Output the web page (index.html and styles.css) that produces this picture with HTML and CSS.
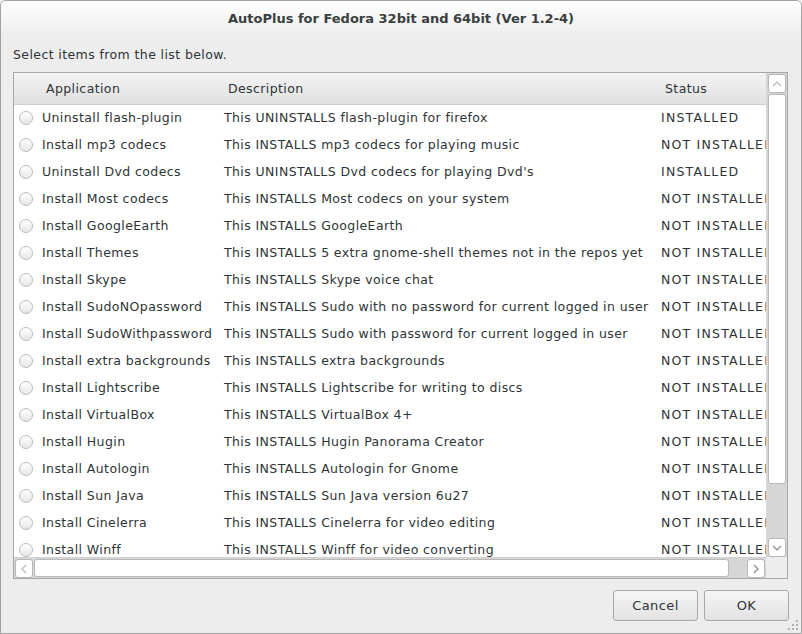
FILE: index.html
```html
<!DOCTYPE html>
<html lang="en">
<head>
    <meta charset="UTF-8">
    <title>AutoPlus for Fedora 32bit and 64bit (Ver 1.2-4)</title>
    <link rel="stylesheet" href="styles.css">
</head>
<body>

<div class="window">
    <div class="titlebar">AutoPlus for Fedora 32bit and 64bit (Ver 1.2-4)</div>

    <div class="content">
        <div class="prompt">Select items from the list below.</div>

        <div class="frame">
            <div class="viewport">
                <table class="items">
                    <colgroup>
                        <col class="col-app">
                        <col class="col-desc">
                        <col class="col-status">
                    </colgroup>
                    <thead>
                        <tr>
                            <th class="th-app">Application</th>
                            <th>Description</th>
                            <th>Status</th>
                        </tr>
                    </thead>
                    <tbody>
                        <tr><td><span class="radio"></span>Uninstall flash-plugin</td><td>This UNINSTALLS flash-plugin for firefox</td><td>INSTALLED</td></tr>
                        <tr><td><span class="radio"></span>Install mp3 codecs</td><td>This INSTALLS mp3 codecs for playing music</td><td>NOT INSTALLED</td></tr>
                        <tr><td><span class="radio"></span>Uninstall Dvd codecs</td><td>This UNINSTALLS Dvd codecs for playing Dvd's</td><td>INSTALLED</td></tr>
                        <tr><td><span class="radio"></span>Install Most codecs</td><td>This INSTALLS Most codecs on your system</td><td>NOT INSTALLED</td></tr>
                        <tr><td><span class="radio"></span>Install GoogleEarth</td><td>This INSTALLS GoogleEarth</td><td>NOT INSTALLED</td></tr>
                        <tr><td><span class="radio"></span>Install Themes</td><td>This INSTALLS 5 extra gnome-shell themes not in the repos yet</td><td>NOT INSTALLED</td></tr>
                        <tr><td><span class="radio"></span>Install Skype</td><td>This INSTALLS Skype voice chat</td><td>NOT INSTALLED</td></tr>
                        <tr><td><span class="radio"></span>Install SudoNOpassword</td><td>This INSTALLS Sudo with no password for current logged in user</td><td>NOT INSTALLED</td></tr>
                        <tr><td><span class="radio"></span>Install SudoWithpassword</td><td>This INSTALLS Sudo with password for current logged in user</td><td>NOT INSTALLED</td></tr>
                        <tr><td><span class="radio"></span>Install extra backgrounds</td><td>This INSTALLS extra backgrounds</td><td>NOT INSTALLED</td></tr>
                        <tr><td><span class="radio"></span>Install Lightscribe</td><td>This INSTALLS Lightscribe for writing to discs</td><td>NOT INSTALLED</td></tr>
                        <tr><td><span class="radio"></span>Install VirtualBox</td><td>This INSTALLS VirtualBox 4+</td><td>NOT INSTALLED</td></tr>
                        <tr><td><span class="radio"></span>Install Hugin</td><td>This INSTALLS Hugin Panorama Creator</td><td>NOT INSTALLED</td></tr>
                        <tr><td><span class="radio"></span>Install Autologin</td><td>This INSTALLS Autologin for Gnome</td><td>NOT INSTALLED</td></tr>
                        <tr><td><span class="radio"></span>Install Sun Java</td><td>This INSTALLS Sun Java version 6u27</td><td>NOT INSTALLED</td></tr>
                        <tr><td><span class="radio"></span>Install Cinelerra</td><td>This INSTALLS Cinelerra for video editing</td><td>NOT INSTALLED</td></tr>
                        <tr><td><span class="radio"></span>Install Winff</td><td>This INSTALLS Winff for video converting</td><td>NOT INSTALLED</td></tr>
                    </tbody>
                </table>
            </div>

            <div class="vscroll">
                <div class="sb-btn">
                    <svg width="10" height="6" viewBox="0 0 10 6"><path d="M1 5 L5 1 L9 5" fill="none" stroke="#b8b8b8" stroke-width="1.2"/></svg>
                </div>
                <div class="sb-thumb-v"></div>
                <div class="sb-rest"></div>
                <div class="sb-btn">
                    <svg width="10" height="6" viewBox="0 0 10 6"><path d="M1 1 L5 5 L9 1" fill="none" stroke="#888" stroke-width="1.2"/></svg>
                </div>
            </div>

            <div class="hscroll">
                <div class="sb-btn">
                    <svg width="6" height="10" viewBox="0 0 6 10"><path d="M5 1 L1 5 L5 9" fill="none" stroke="#b8b8b8" stroke-width="1.2"/></svg>
                </div>
                <div class="sb-thumb-h"></div>
                <div class="sb-rest"></div>
                <div class="sb-btn">
                    <svg width="6" height="10" viewBox="0 0 6 10"><path d="M1 1 L5 5 L1 9" fill="none" stroke="#888" stroke-width="1.2"/></svg>
                </div>
            </div>

            <div class="corner"></div>
        </div>
    </div>

    <div class="actions">
        <button class="btn btn-cancel">Cancel</button>
        <button class="btn btn-ok">OK</button>
    </div>

    <div class="grip">
        <svg width="10" height="10" viewBox="0 0 10 10" fill="#b0b0b0">
            <rect x="8" y="0" width="2" height="2"/>
            <rect x="4" y="4" width="2" height="2"/><rect x="8" y="4" width="2" height="2"/>
            <rect x="0" y="8" width="2" height="2"/><rect x="4" y="8" width="2" height="2"/><rect x="8" y="8" width="2" height="2"/>
        </svg>
    </div>
</div>

</body>
</html>
```

FILE: styles.css
```css
* {
    box-sizing: border-box;
}
body {
    margin: 0;
    font-family: "DejaVu Sans", sans-serif;
    font-size: 12.5px;
    letter-spacing: 0.4px;
    color: #2e3436;
    background-color: #ededed;
}
.window {
    position: relative;
    width: 802px;
    height: 634px;
    display: flex;
    flex-direction: column;
    background-color: #ededed;
    border: 1px solid #a2a2a2;
    border-radius: 6px 6px 0 0;
    overflow: hidden;
}
.titlebar {
    height: 34px;
    flex: none;
    display: flex;
    align-items: center;
    justify-content: center;
    font-weight: bold;
    font-size: 13px;
    letter-spacing: 0;
    color: #3a3f41;
    background: linear-gradient(#ffffff, #ededed);
}
.content {
    flex: 1;
    display: flex;
    flex-direction: column;
    padding: 10px 13px 0 12px;
}
.prompt {
    height: 27px;
    line-height: 20px;
}
.frame {
    height: 507px;
    display: grid;
    grid-template-columns: 1fr 21px;
    grid-template-rows: 1fr 21px;
    border: 1px solid #a8a8a8;
    background-color: #ffffff;
}
.viewport {
    overflow: hidden;
}
.items {
    width: 800px;
    table-layout: fixed;
    border-collapse: collapse;
}
.col-app {
    width: 204px;
}
.col-desc {
    width: 437px;
}
.col-status {
    width: 159px;
}
th {
    height: 31px;
    font-weight: normal;
    text-align: left;
    padding: 0 0 0 10px;
    background: linear-gradient(#f4f4f4, #e0e0e0);
    border-bottom: 1px solid #d0d0d0;
}
th.th-app {
    padding-left: 32px;
}
td {
    height: 27px;
    padding: 0 0 0 6px;
    white-space: nowrap;
    overflow: hidden;
}
td:first-child {
    padding-left: 5px;
}
td:last-child {
    letter-spacing: 1.2px;
}
.radio {
    display: inline-block;
    width: 14px;
    height: 14px;
    margin-right: 9px;
    vertical-align: -3px;
    border: 1px solid #bcbcbc;
    border-radius: 50%;
    background: linear-gradient(#ffffff, #e6e6e6);
}
.vscroll {
    display: flex;
    flex-direction: column;
    padding: 1px 1px 0 2px;
    background-color: #d6d6d6;
}
.hscroll {
    display: flex;
    padding: 1px 1px 1px 1px;
    background-color: #d6d6d6;
    border-top: 1px solid #d0d0d0;
}
.corner {
    background-color: #ededed;
}
.sb-btn {
    flex: none;
    width: 18px;
    height: 19px;
    display: flex;
    align-items: center;
    justify-content: center;
    background: #ffffff;
    border: 1px solid #b8b8b8;
    border-radius: 3px;
}
.sb-thumb-v {
    height: 390px;
    margin-top: 1px;
    background: #ffffff;
    border: 1px solid #b8b8b8;
    border-radius: 3px;
}
.sb-thumb-h {
    width: 695px;
    margin-left: 1px;
    background: #ffffff;
    border: 1px solid #b8b8b8;
    border-radius: 3px;
}
.sb-rest {
    flex: 1;
}
.actions {
    flex: 1;
    display: flex;
    justify-content: flex-end;
    align-items: flex-start;
    gap: 6px;
    padding: 11px 12px 0 0;
}
.btn {
    width: 85px;
    height: 31px;
    font-family: inherit;
    font-size: 13px;
    letter-spacing: inherit;
    color: #2e3436;
    background: linear-gradient(#f6f6f6, #e2e2e2);
    border: 1px solid #a8a8a8;
    border-radius: 3px;
}
.grip {
    position: absolute;
    right: 3px;
    bottom: 3px;
    line-height: 0;
}
```
